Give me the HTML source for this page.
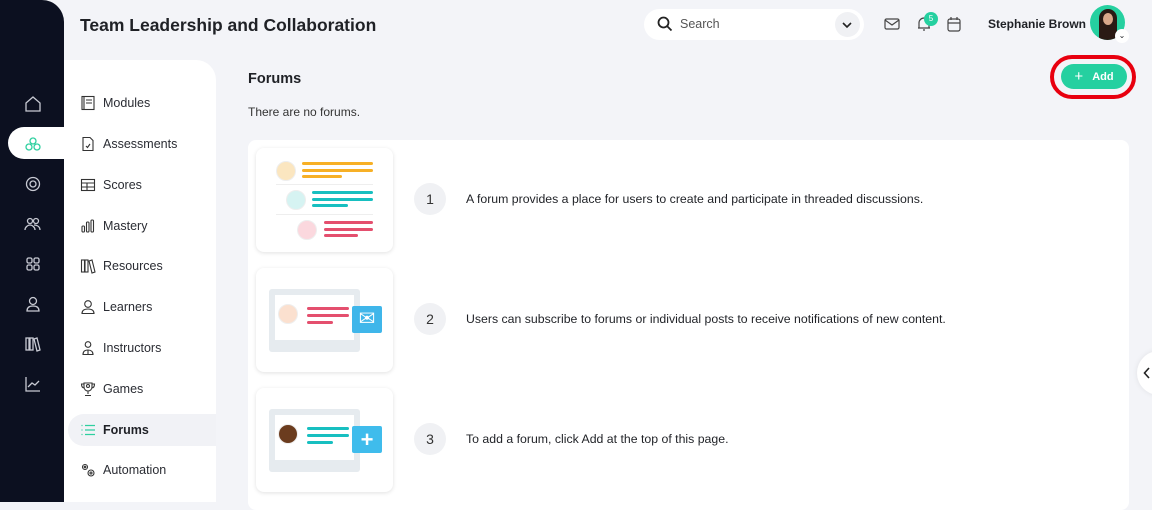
<!DOCTYPE html>
<html><head><style>
*{margin:0;padding:0;box-sizing:border-box}
body{width:1152px;height:502px;overflow:hidden;background:#f3f4f8;font-family:"Liberation Sans",sans-serif;position:relative;color:#1f2126}
.a{position:absolute}
.side{left:0;top:0;width:64px;height:502px;background:#0c1020;border-top-right-radius:22px}
.si{position:absolute;left:24px;width:18px;height:18px}
.sub{left:64px;top:60px;width:152px;height:442px;background:#fff;border-top-right-radius:20px}
.mi{position:absolute;left:16px;height:32px;display:flex;align-items:center;font-size:12.5px;color:#2a2c33}
.mi svg{width:16px;height:16px;margin-right:7px}
.card{left:248px;top:140px;width:881px;height:370px;background:#fff;border-radius:8px}
.ic{position:absolute;left:8px;width:137px;height:104px;background:#fff;border-radius:8px;box-shadow:0 1px 4px rgba(0,0,0,.12)}
.num{position:absolute;left:166px;width:32px;height:32px;border-radius:50%;background:#f0f1f4;text-align:center;line-height:32px;font-size:14px;color:#333}
.tx{position:absolute;left:218px;font-size:12.3px;color:#1f2126}
.bar{position:absolute;height:3px;border-radius:2px}
.av{position:absolute;width:20px;height:20px;border-radius:50%;background:#fff;border:1px solid #eee}
</style></head><body>
<div class="a side">
<svg class="si" style="top:95px" viewBox="0 0 18 18" fill="none" stroke="#c8cad3" stroke-width="1.3"><path d="M2 8L9 2l7 6v8H2z"/></svg>
<div class="a" style="left:8px;top:127px;width:56px;height:32px;background:#fff;border-radius:16px 0 0 16px"></div>
<svg class="si" style="top:135px" viewBox="0 0 18 18" fill="none" stroke="#2ecf9f" stroke-width="1.3"><circle cx="9" cy="6" r="3"/><circle cx="5" cy="12" r="3"/><circle cx="13" cy="12" r="3"/></svg>
<svg class="si" style="top:175px" viewBox="0 0 18 18" fill="none" stroke="#c8cad3" stroke-width="1.3"><circle cx="9" cy="9" r="6.5"/><circle cx="9" cy="9" r="3"/></svg>
<svg class="si" style="top:215px" viewBox="0 0 18 18" fill="none" stroke="#c8cad3" stroke-width="1.3"><circle cx="6" cy="6" r="2.5"/><circle cx="12" cy="6" r="2.5"/><path d="M1 15c0-3 3-5 5-5s5 2 5 5M10 10c2 0 6 1 6 5"/></svg>
<svg class="si" style="top:255px" viewBox="0 0 18 18" fill="none" stroke="#c8cad3" stroke-width="1.3"><rect x="3" y="3" width="5" height="5" rx="1.5"/><rect x="10" y="3" width="5" height="5" rx="1.5"/><rect x="3" y="10" width="5" height="5" rx="1.5"/><rect x="10" y="10" width="5" height="5" rx="1.5"/></svg>
<svg class="si" style="top:295px" viewBox="0 0 18 18" fill="none" stroke="#c8cad3" stroke-width="1.3"><circle cx="9" cy="6" r="3.5"/><path d="M3 16c0-4 3-5 6-5s6 1 6 5z"/></svg>
<svg class="si" style="top:335px" viewBox="0 0 18 18" fill="none" stroke="#c8cad3" stroke-width="1.3"><rect x="2" y="3" width="3" height="12"/><rect x="6" y="3" width="3" height="12"/><path d="M10 4l3-1 3 12-3 1z"/></svg>
<svg class="si" style="top:375px" viewBox="0 0 18 18" fill="none" stroke="#c8cad3" stroke-width="1.3"><path d="M2 2v14h14M4 12l4-4 3 2 4-4"/></svg>
</div>
<div class="a" style="left:80px;top:15px;font-size:17.5px;font-weight:bold;color:#1f2126">Team Leadership and Collaboration</div>
<div class="a" style="left:644px;top:9px;width:220px;height:31px;background:#fff;border-radius:16px"></div>
<svg class="a" style="left:657px;top:16px" width="16" height="16" viewBox="0 0 16 16" fill="none" stroke="#222" stroke-width="1.8"><circle cx="6.5" cy="6.5" r="5"/><path d="M10 10l4.5 4.5"/></svg>
<div class="a" style="left:680px;top:17px;font-size:12.5px;color:#555">Search</div>
<div class="a" style="left:835px;top:12px;width:25px;height:25px;border-radius:50%;background:#f0f1f4"></div>
<svg class="a" style="left:841px;top:20px" width="12" height="10" viewBox="0 0 12 10" fill="none" stroke="#222" stroke-width="1.6"><path d="M2 3l4 4 4-4"/></svg>
<svg class="a" style="left:884px;top:17px" width="16" height="14" viewBox="0 0 16 14" fill="none" stroke="#444" stroke-width="1.2"><rect x="1" y="2" width="14" height="10" rx="1.5"/><path d="M1 3l7 5 7-5"/></svg>
<svg class="a" style="left:916px;top:16px" width="16" height="16" viewBox="0 0 16 16" fill="none" stroke="#444" stroke-width="1.2"><path d="M3 12V7a5 5 0 0110 0v5zM2 12h12M7 14h2"/></svg>
<div class="a" style="left:924px;top:12px;width:14px;height:14px;border-radius:50%;background:#25d0a0;color:#fff;font-size:8px;text-align:center;line-height:14px">5</div>
<svg class="a" style="left:947px;top:16px" width="14" height="16" viewBox="0 0 14 16" fill="none" stroke="#444" stroke-width="1.2"><rect x="1" y="3" width="12" height="12" rx="2"/><path d="M1 7h12M4 1v3M10 1v3"/></svg>
<div class="a" style="left:988px;top:17px;font-size:12px;font-weight:bold">Stephanie Brown</div>
<div class="a" style="left:1090px;top:5px;width:35px;height:35px;border-radius:50%;background:#25d0a0;overflow:hidden"><div style="position:absolute;left:9px;top:4px;width:18px;height:34px;background:#2a1a14;border-radius:9px 9px 0 0"></div><div style="position:absolute;left:13px;top:8px;width:10px;height:12px;background:#d9a88a;border-radius:50%"></div></div>
<div class="a" style="left:1115px;top:29px;width:14px;height:14px;border-radius:50%;background:#fff;font-size:8px;text-align:center;line-height:13px">⌄</div>

<div class="a sub">
<div class="mi" style="top:27px"><svg viewBox="0 0 16 16" fill="none" stroke="#333" stroke-width="1.1"><rect x="2" y="1.5" width="12" height="13"/><path d="M4 1.5v13M6 5h6M6 8h6"/></svg>Modules</div>
<div class="mi" style="top:68px"><svg viewBox="0 0 16 16" fill="none" stroke="#333" stroke-width="1.1"><path d="M3 1.5h7l3 3v10H3zM6 10l1.5 1.5L10 8"/></svg>Assessments</div>
<div class="mi" style="top:109px"><svg viewBox="0 0 16 16" fill="none" stroke="#333" stroke-width="1.1"><rect x="1.5" y="2.5" width="13" height="11"/><path d="M1.5 6h13M1.5 10h13M7 6v7.5"/></svg>Scores</div>
<div class="mi" style="top:150px"><svg viewBox="0 0 16 16" fill="none" stroke="#333" stroke-width="1.1"><rect x="2" y="8" width="2.5" height="6" rx="1"/><rect x="6.5" y="4" width="2.5" height="10" rx="1"/><rect x="11" y="2" width="2.5" height="12" rx="1"/></svg>Mastery</div>
<div class="mi" style="top:190px"><svg viewBox="0 0 16 16" fill="none" stroke="#333" stroke-width="1.1"><rect x="1.5" y="2" width="3" height="12"/><rect x="5" y="2" width="3" height="12"/><path d="M9 3l3-1 3 12-3 1z"/></svg>Resources</div>
<div class="mi" style="top:231px"><svg viewBox="0 0 16 16" fill="none" stroke="#333" stroke-width="1.1"><circle cx="8" cy="5" r="3.3"/><path d="M2 14.5c0-3.5 3-4.5 6-4.5s6 1 6 4.5z"/></svg>Learners</div>
<div class="mi" style="top:272px"><svg viewBox="0 0 16 16" fill="none" stroke="#333" stroke-width="1.1"><circle cx="8" cy="4.5" r="2.8"/><path d="M3 14.5c0-3 2-4.5 5-4.5s5 1.5 5 4.5zM8 10v4"/></svg>Instructors</div>
<div class="mi" style="top:313px"><svg viewBox="0 0 16 16" fill="none" stroke="#333" stroke-width="1.1"><path d="M4 2h8v4a4 4 0 01-8 0zM4 3H1.5c0 3 1.5 4 3 4M12 3h2.5c0 3-1.5 4-3 4M8 10v3M5 14.5h6"/><circle cx="8" cy="5" r="1.5"/></svg>Games</div>
<div class="a" style="left:4px;top:354px;width:148px;height:32px;background:#f1f2f6;border-radius:16px 0 0 16px"></div>
<div class="mi" style="top:354px;font-weight:bold;color:#1f2126"><svg viewBox="0 0 16 16" fill="none" stroke="#2ecf9f" stroke-width="1.2"><path d="M5 3.5h10M5 8h10M5 12.5h10M1.5 3.5h1M1.5 8h1M1.5 12.5h1"/></svg>Forums</div>
<div class="mi" style="top:394px"><svg viewBox="0 0 16 16" fill="none" stroke="#333" stroke-width="1.1"><circle cx="5" cy="5" r="2.5"/><circle cx="11" cy="11" r="3"/><circle cx="5" cy="5" r="0.8"/><circle cx="11" cy="11" r="1"/></svg>Automation</div>
</div>

<div class="a" style="left:248px;top:71px;font-size:14.5px;font-weight:bold">Forums</div>
<div class="a" style="left:248px;top:105px;font-size:12px;color:#333">There are no forums.</div>
<div class="a" style="left:1050px;top:55px;width:86px;height:44px;border:4px solid #e8000f;border-radius:22px"></div>
<div class="a" style="left:1061px;top:64px;width:66px;height:25px;background:#25d0a0;border-radius:13px;color:#fff;font-size:11px;font-weight:bold;display:flex;align-items:center;justify-content:center;gap:9px"><span style="font-size:15px;font-weight:normal;line-height:1">+</span><span>Add</span></div>

<div class="a card">
<div class="ic" style="top:8px">
 <div class="av" style="left:20px;top:13px;background:#fbe6c0"></div>
 <div class="bar" style="left:46px;top:14px;width:71px;background:#f7b026"></div><div class="bar" style="left:46px;top:21px;width:71px;background:#f7b026"></div><div class="bar" style="left:46px;top:27px;width:40px;background:#f7b026"></div>
 <div style="position:absolute;left:20px;top:36px;width:97px;height:1px;background:#eee"></div>
 <div class="av" style="left:30px;top:42px;background:#d6f3f2"></div>
 <div class="bar" style="left:56px;top:43px;width:61px;background:#17bfc0"></div><div class="bar" style="left:56px;top:50px;width:61px;background:#17bfc0"></div><div class="bar" style="left:56px;top:56px;width:36px;background:#17bfc0"></div>
 <div style="position:absolute;left:20px;top:66px;width:97px;height:1px;background:#eee"></div>
 <div class="av" style="left:41px;top:72px;background:#fbd8de"></div>
 <div class="bar" style="left:68px;top:73px;width:49px;background:#e44f6e"></div><div class="bar" style="left:68px;top:80px;width:49px;background:#e44f6e"></div><div class="bar" style="left:68px;top:86px;width:34px;background:#e44f6e"></div>
</div>
<div class="num" style="top:43px">1</div>
<div class="tx" style="top:52px">A forum provides a place for users to create and participate in threaded discussions.</div>

<div class="ic" style="top:128px">
 <div style="position:absolute;left:13px;top:21px;width:91px;height:63px;background:#e6ebef;border-radius:3px"></div>
 <div style="position:absolute;left:19px;top:27px;width:79px;height:45px;background:#fff"></div>
 <div class="av" style="left:22px;top:36px;background:#fbe0cf"></div>
 <div class="bar" style="left:51px;top:39px;width:42px;height:3px;background:#e44f6e"></div><div class="bar" style="left:51px;top:46px;width:42px;background:#e44f6e"></div><div class="bar" style="left:51px;top:53px;width:26px;background:#e44f6e"></div>
 <div style="position:absolute;left:96px;top:38px;width:30px;height:27px;background:#3fb6ea;border-radius:2px;color:#fff;font-size:20px;text-align:center;line-height:27px">✉</div>
</div>
<div class="num" style="top:163px">2</div>
<div class="tx" style="top:172px">Users can subscribe to forums or individual posts to receive notifications of new content.</div>

<div class="ic" style="top:248px">
 <div style="position:absolute;left:13px;top:21px;width:91px;height:63px;background:#e6ebef;border-radius:3px"></div>
 <div style="position:absolute;left:19px;top:27px;width:79px;height:45px;background:#fff"></div>
 <div class="av" style="left:22px;top:36px;background:#6b3c1e"></div>
 <div class="bar" style="left:51px;top:39px;width:42px;background:#17bfc0"></div><div class="bar" style="left:51px;top:46px;width:42px;background:#17bfc0"></div><div class="bar" style="left:51px;top:53px;width:26px;background:#17bfc0"></div>
 <div style="position:absolute;left:96px;top:38px;width:30px;height:27px;background:#3fbcec;border-radius:2px;color:#fff;font-size:22px;font-weight:bold;text-align:center;line-height:27px">+</div>
</div>
<div class="num" style="top:283px">3</div>
<div class="tx" style="top:292px">To add a forum, click Add at the top of this page.</div>
</div>

<div class="a" style="left:1137px;top:351px;width:44px;height:44px;border-radius:50%;background:#fff;box-shadow:0 0 6px rgba(0,0,0,.08)"></div>
<svg class="a" style="left:1143px;top:367px" width="8" height="12" viewBox="0 0 8 12" fill="none" stroke="#222" stroke-width="1.6"><path d="M6 1L1.5 6 6 11"/></svg>
</body></html>
